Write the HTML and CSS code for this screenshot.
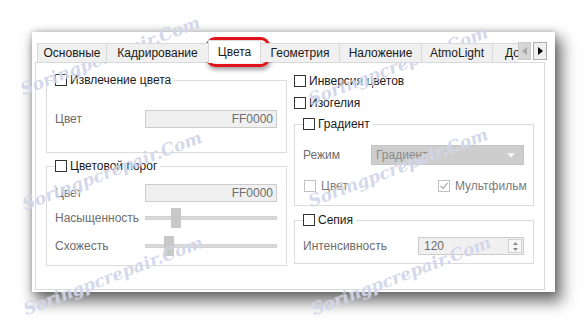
FILE: index.html
```html
<!DOCTYPE html>
<html lang="ru">
<head>
    <meta charset="UTF-8">
    <meta name="viewport" content="width=device-width, initial-scale=1.0">
    <title>Цвета</title>
    <link rel="stylesheet" href="styles.css">
</head>
<body>
    <div class="page">
        <div class="window">
            <div class="tabbar">
                <div class="tabs">
                    <div class="tab tab--first" style="width: 70px">Основные</div>
                    <div class="tab" style="width: 102px">Кадрирование</div>
                    <div class="tab tab--active" style="width: 53px">Цвета</div>
                    <div class="tab" style="width: 79px">Геометрия</div>
                    <div class="tab" style="width: 82px">Наложение</div>
                    <div class="tab" style="width: 71px">AtmoLight</div>
                    <div class="tab tab--cut">Дополнительно</div>
                </div>
                <div class="tabs__scroll">
                    <span class="scroll__btn scroll__btn--off">
                        <svg width="5" height="8" viewBox="0 0 5 8"><path d="M5 0 L0 4 L5 8 Z" /></svg>
                    </span>
                    <span class="scroll__btn">
                        <svg width="5" height="8" viewBox="0 0 5 8"><path d="M0 0 L5 4 L0 8 Z" /></svg>
                    </span>
                </div>
            </div>

            <div class="panel">
                <!-- left column -->
                <div class="panel__col panel__col--left">
                    <fieldset class="group group--extract">
                        <legend class="group__legend"><span class="check"></span>Извлечение цвета</legend>
                        <div class="field">
                            <span class="field__label">Цвет</span>
                            <div class="input input--hex">FF0000</div>
                        </div>
                    </fieldset>

                    <fieldset class="group group--threshold">
                        <legend class="group__legend"><span class="check"></span>Цветовой порог</legend>
                        <div class="field">
                            <span class="field__label">Цвет</span>
                            <div class="input input--hex">FF0000</div>
                        </div>
                        <div class="field field--slider">
                            <span class="field__label">Насыщенность</span>
                            <div class="slider">
                                <span class="slider__thumb" style="margin-left: 25px"></span>
                            </div>
                        </div>
                        <div class="field field--slider field--last">
                            <span class="field__label">Схожесть</span>
                            <div class="slider">
                                <span class="slider__thumb" style="margin-left: 18px"></span>
                            </div>
                        </div>
                    </fieldset>
                </div>

                <!-- right column -->
                <div class="panel__col panel__col--right">
                    <label class="option option--invert"><span class="check"></span>Инверсия цветов</label>
                    <label class="option option--iso"><span class="check"></span>Изогелия</label>

                    <fieldset class="group group--gradient">
                        <legend class="group__legend"><span class="check"></span>Градиент</legend>
                        <div class="field">
                            <span class="field__label field__label--mode">Режим</span>
                            <div class="combo">
                                <span>Градиент</span>
                                <svg width="8" height="5" viewBox="0 0 8 5"><path d="M0 0 L8 0 L4 5 Z" /></svg>
                            </div>
                        </div>
                        <div class="checks">
                            <label class="option option--off"><span class="check check--off"></span>Цвет</label>
                            <label class="option option--off option--multi">
                                <span class="check check--off">
                                    <svg width="10" height="10" viewBox="0 0 10 10"><path d="M1.5 5 L4 7.5 L8.8 1.8" /></svg>
                                </span>Мультфильм
                            </label>
                        </div>
                    </fieldset>

                    <fieldset class="group group--sepia">
                        <legend class="group__legend"><span class="check"></span>Сепия</legend>
                        <div class="field">
                            <span class="field__label field__label--intensity">Интенсивность</span>
                            <div class="spin">
                                <span class="spin__value">120</span>
                                <span class="spin__buttons">
                                    <svg width="5" height="3" viewBox="0 0 5 3"><path d="M0 3 L2.5 0 L5 3 Z" /></svg>
                                    <svg width="5" height="3" viewBox="0 0 5 3"><path d="M0 0 L5 0 L2.5 3 Z" /></svg>
                                </span>
                            </div>
                        </div>
                    </fieldset>
                </div>
            </div>
        </div>

        <!-- red mark round the active tab -->
        <div class="highlight"></div>

        <div class="watermarks">
            <span class="watermark" style="left: 25px; top: 78px">Soringpcrepair.Com</span>
            <span class="watermark" style="left: 313px; top: 88px">Soringpcrepair.Com</span>
            <span class="watermark" style="left: 27px; top: 193px">Soringpcrepair.Com</span>
            <span class="watermark" style="left: 313px; top: 190px">Soringpcrepair.Com</span>
            <span class="watermark" style="left: 28px; top: 298px">Soringpcrepair.Com</span>
            <span class="watermark" style="left: 316px; top: 298px">Soringpcrepair.Com</span>
        </div>
    </div>
</body>
</html>
```

FILE: styles.css
```css
* {
    box-sizing: border-box;
    margin: 0;
    padding: 0;
}

body {
    font-family: 'Liberation Sans', Arial, sans-serif;
    font-size: 12px;
    color: #1a1a1a;
    background: white;
}

.page {
    position: relative;
    width: 587px;
    height: 324px;
    padding: 32px 0 0 32px;
    overflow: hidden;
}

/* WINDOW
=============== */
.window {
    display: flex;
    flex-direction: column;
    width: 523px;
    height: 260px;
    padding: 8px 10px 2px 3px;
    background: white;
    box-shadow: 0 0 6px rgba(0, 0, 0, 0.25), 5px 8px 14px 2px rgba(0, 0, 0, 0.55);
}

/* TABS */
.tabbar {
    display: flex;
    align-items: flex-end;
    height: 23px;
    margin: 0 -2px -1px 0;
    padding-left: 2px;
    position: relative;
    z-index: 1;
}

.tabs {
    flex: 1;
    display: flex;
    align-items: flex-end;
    height: 23px;
    overflow: hidden;
}

.tab {
    flex: none;
    height: 19px;
    margin-bottom: 1px;
    background: #f0f0f0;
    border-top: 1px solid #d9d9d9;
    border-right: 1px solid #d9d9d9;
    text-align: center;
    line-height: 18px;
    white-space: nowrap;
}

.tab--first {
    border-left: 1px solid #d9d9d9;
}

.tab--active {
    height: 23px;
    margin-bottom: 0;
    margin-left: -1px;
    padding-top: 2px;
    background: white;
    border-left: 1px solid #d9d9d9;
}

.tab--cut {
    padding-left: 12px;
    border-right: none;
}

.tabs__scroll {
    display: flex;
    gap: 2px;
    margin-bottom: 3px;
}

.scroll__btn {
    display: flex;
    align-items: center;
    justify-content: center;
    width: 13px;
    height: 18px;
    background: #f0f0f0;
    border: 1px solid #adadad;
}

.scroll__btn + .scroll__btn {
    width: 14px;
}

.scroll__btn svg {
    fill: black;
}

.scroll__btn--off {
    background: #d6d6d6;
    border-color: #cbcbcb;
}

.scroll__btn--off svg {
    fill: #a8a8a8;
}

/* PANEL */
.panel {
    flex: 1;
    display: flex;
    gap: 7px;
    padding: 0 10px;
    border: 1px solid #d9d9d9;
}

.panel__col--left {
    width: 241px;
}

.panel__col--right {
    width: 240px;
}

/* GROUPS */
.group {
    min-width: 0;
    padding: 0 9px 0 8px;
    border: 1px solid #dcdcdc;
}

.group__legend {
    display: flex;
    align-items: center;
    height: 14px;
    padding-right: 3px;
    line-height: 14px;
}

.group--extract {
    margin-top: 10px;
    padding-top: 23px;
    padding-bottom: 24px;
}

.group--threshold {
    margin-top: 6px;
    padding-top: 11px;
    padding-bottom: 9px;
}

.group--gradient {
    margin-top: 7px;
    padding-top: 15px;
    padding-bottom: 12px;
}

.group--sepia {
    margin-top: 7px;
    padding-top: 10px;
    padding-bottom: 8px;
}

/* CHECKBOXES */
.check {
    display: inline-flex;
    align-items: center;
    justify-content: center;
    flex: none;
    width: 12px;
    height: 12px;
    margin-right: 3px;
    background: white;
    border: 1px solid #333;
}

.check--off {
    border-color: #c2c2c2;
}

.check svg {
    fill: none;
    stroke: #b0b0b0;
    stroke-width: 1.2;
}

.option {
    display: flex;
    align-items: center;
    height: 14px;
    line-height: 14px;
}

.option--invert {
    margin-top: 11px;
}

.option--iso {
    margin-top: 8px;
}

.option--off {
    color: #7a7a7a;
}

.option--off .check {
    margin-right: 5px;
}

.checks {
    display: flex;
    margin-top: 15px;
    padding-left: 1px;
}

.option--multi {
    margin-left: 90px;
}

/* FIELDS */
.field {
    display: flex;
    align-items: center;
    height: 18px;
}

.field__label {
    width: 90px;
    flex: none;
    color: #6d6d6d;
    white-space: nowrap;
}

.field__label--mode {
    width: 68px;
}

.field__label--intensity {
    width: 115px;
}

.field--slider {
    height: 20px;
    margin-top: 6px;
}

.field--last {
    margin-top: 8px;
}

.input {
    width: 132px;
    height: 18px;
    padding: 0 3px;
    background: #f0f0f0;
    border: 1px solid #cccccc;
    color: #6d6d6d;
    line-height: 16px;
}

.input--hex {
    text-align: right;
}

.slider {
    display: flex;
    align-items: center;
    width: 133px;
    height: 4px;
    background: #dadada;
    border: 1px solid #d2d2d2;
}

.slider__thumb {
    width: 10px;
    height: 20px;
    flex: none;
    background: #c8c8c8;
}

.combo {
    display: flex;
    align-items: center;
    justify-content: space-between;
    width: 154px;
    height: 20px;
    padding: 0 8px 0 4px;
    background: #cdcdcd;
    border: 1px solid #c4c4c4;
    color: #8a8a8a;
}

.combo svg {
    fill: #f2f2f2;
}

.spin {
    display: flex;
    align-items: center;
    justify-content: space-between;
    width: 107px;
    height: 18px;
    padding: 0 1px 0 5px;
    background: #f0f0f0;
    border: 1px solid #cccccc;
    color: #6d6d6d;
}

.spin__buttons {
    display: flex;
    flex-direction: column;
    align-items: center;
    justify-content: space-around;
    width: 14px;
    height: 14px;
    background: #f7f7f7;
    border: 1px solid #d2d2d2;
}

.spin__buttons svg {
    fill: #8a8a8a;
}

/* RED MARK */
.highlight {
    position: absolute;
    left: 206px;
    top: 37px;
    width: 64px;
    height: 30px;
    border: 3px solid #e0131c;
    border-radius: 9px;
    box-shadow: 1px 3px 4px rgba(0, 0, 0, 0.35), inset 0 0 2px rgba(0, 0, 0, 0.2);
}

/* WATERMARKS */
.watermarks {
    position: absolute;
    inset: 0;
    pointer-events: none;
}

.watermark {
    position: absolute;
    font-family: 'DejaVu Serif', serif;
    font-style: italic;
    font-weight: bold;
    font-size: 17px;
    line-height: 22px;
    color: rgba(150, 160, 205, 0.42);
    text-shadow: 0 0 1px rgba(255, 255, 255, 0.9);
    white-space: nowrap;
    transform: rotate(-21deg);
    transform-origin: left bottom;
}
```
